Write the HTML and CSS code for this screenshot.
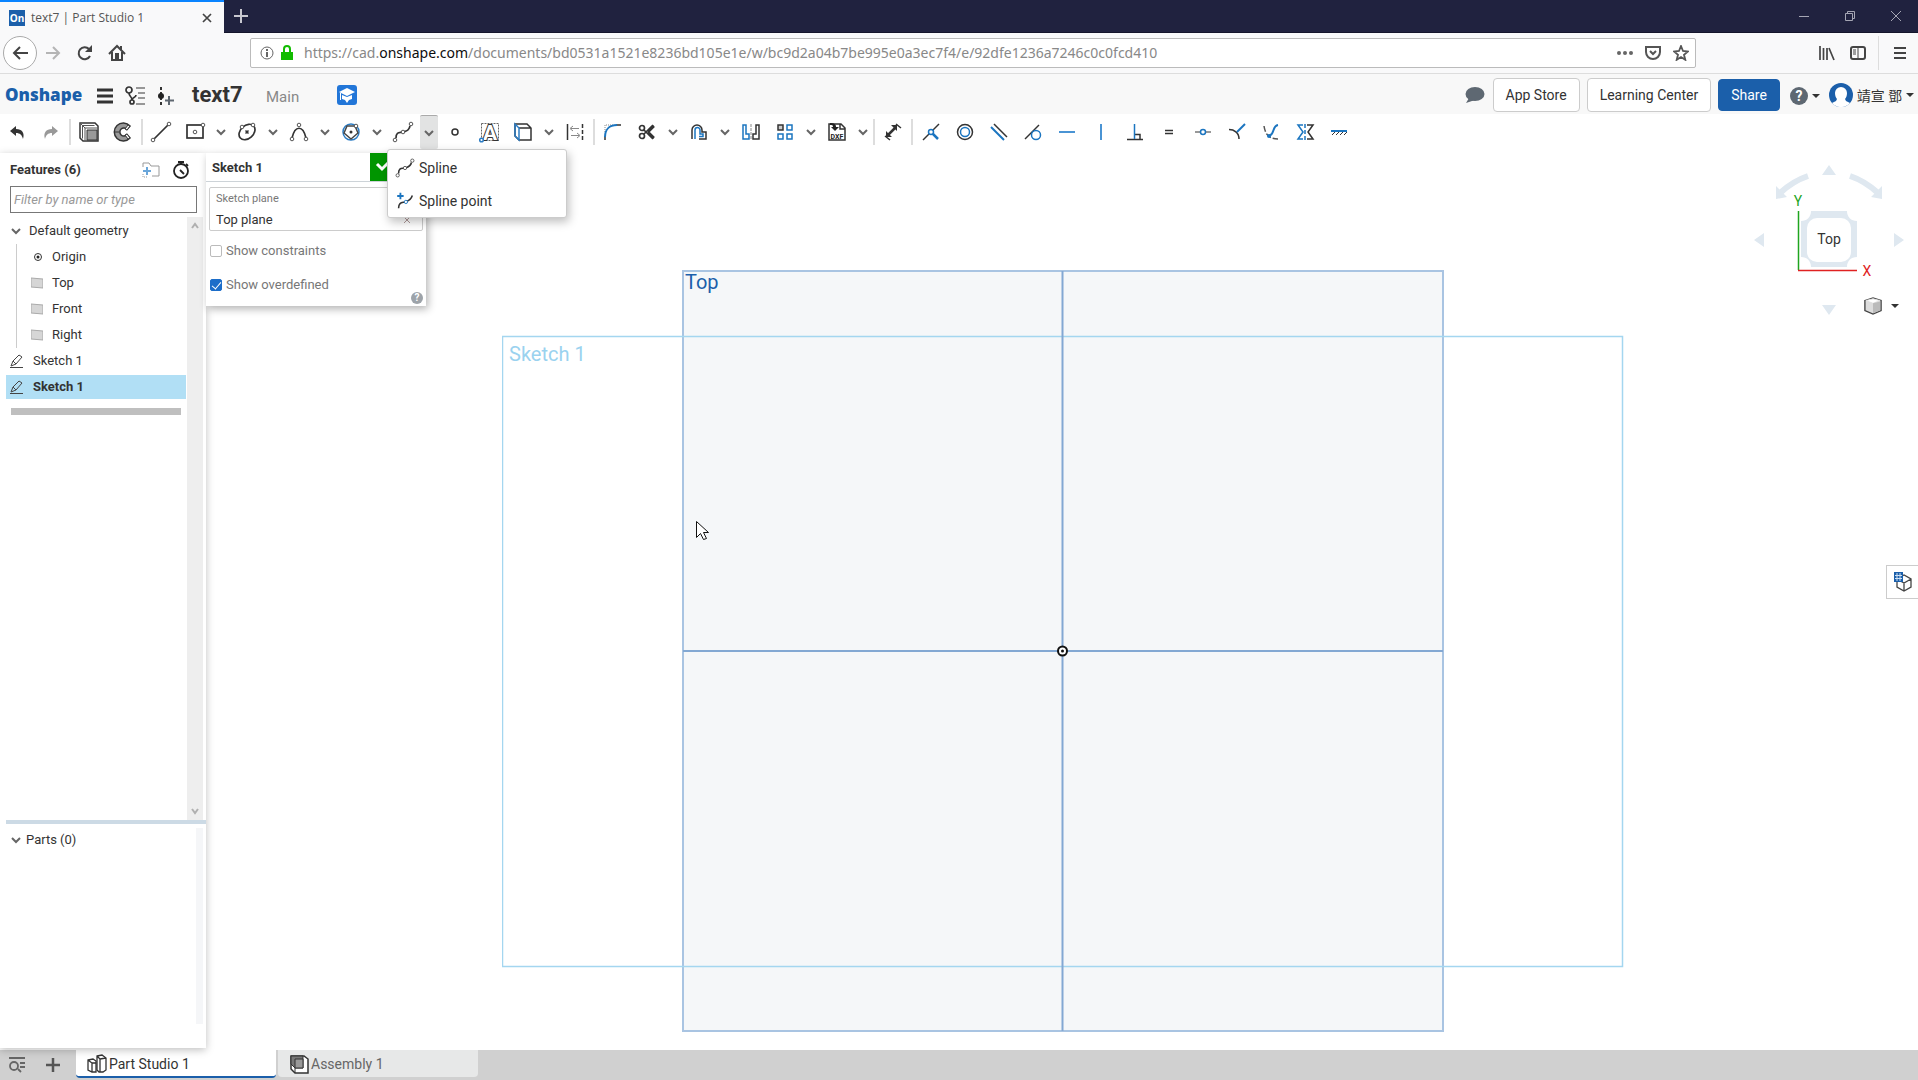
FILE: index.html
```html
<!DOCTYPE html>
<html lang="en">
<head>
<meta charset="utf-8">
<title>text7 | Part Studio 1</title>
<link rel="stylesheet" href="styles.css">
</head>
<body>
<svg class="defs" aria-hidden="true">
  <symbol id="chev" viewBox="0 0 12 12"><path d="M2 4l4 4 4-4" fill="none" stroke="#666" stroke-width="2"/></symbol>
  <symbol id="caret" viewBox="0 0 8 6"><path d="M0 1h8L4 5z" fill="#333"/></symbol>
  <symbol id="plane" viewBox="0 0 12 12"><path d="M0 1l12 1v9L0 10z" fill="#d6d6d6" stroke="#aaa" stroke-width="1"/></symbol>
  <symbol id="pencil" viewBox="0 0 14 14"><path d="M1 12l2-5 6-6 3 2-6 7zM0 13.500h13M3 7l3 3" fill="none" stroke="#444" stroke-width="1"/></symbol>
  <symbol id="spline" viewBox="0 0 24 24"><path d="M5 18C5 11 9 13 12 12S18 11 19 6" fill="none" stroke="#333" stroke-width="1.700"/><g fill="#fff" stroke="#555"><circle cx="4" cy="20" r="1.800"/><circle cx="12" cy="12" r="1.800"/><circle cx="20" cy="4" r="1.800"/></g></symbol>
</svg>

<header class="tabstrip">
  <div class="browser-tab">
    <span class="favicon">On</span>
    <span class="browser-tab-title">text7 | Part Studio 1</span>
    <button class="plain" aria-label="Close tab"><svg width="12" height="12" viewBox="0 0 12 12"><path d="M2 2l8 8M10 2l-8 8" stroke="#444" stroke-width="1.700"/></svg></button>
  </div>
  <button class="plain new-tab" aria-label="New tab"><svg width="14" height="14" viewBox="0 0 14 14"><path d="M7 0v14M0 7h14" stroke="#c8c8d0" stroke-width="2"/></svg></button>
  <div class="window-controls">
    <button class="plain" aria-label="Minimize"><svg width="12" height="12"><path d="M1 6.500h10" stroke="#a5a6b4"/></svg></button>
    <button class="plain" aria-label="Restore"><svg width="12" height="12" fill="none" stroke="#a5a6b4"><path d="M1.500 3.500h7v7h-7zM3.500 3.500v-2h7v7h-2"/></svg></button>
    <button class="plain" aria-label="Close"><svg width="12" height="12"><path d="M1 1l10 10M11 1L1 11" stroke="#a5a6b4"/></svg></button>
  </div>
</header>

<nav class="navbar">
  <div class="nav-buttons">
    <button class="plain back" aria-label="Back"><svg width="20" height="20" viewBox="0 0 20 20"><path d="M18 10H4M10 4l-6 6 6 6" fill="none" stroke="#444" stroke-width="2"/></svg></button>
    <button class="plain" aria-label="Forward"><svg width="18" height="18" viewBox="0 0 18 18"><path d="M2 9h13M9 3l6 6-6 6" fill="none" stroke="#b5b5b5" stroke-width="2"/></svg></button>
    <button class="plain" aria-label="Reload"><svg width="18" height="18" viewBox="0 0 18 18"><path d="M14 12A6 6 0 1 1 13 5" fill="none" stroke="#444" stroke-width="2"/><path d="M16 1v7H9z" fill="#444"/></svg></button>
    <button class="plain" aria-label="Home"><svg width="18" height="18" viewBox="0 0 18 18"><path d="M1 10l8-8 8 8M4 8v8h10V8M13 2v4" fill="none" stroke="#444" stroke-width="2"/><path d="M7 16V9h4v7z" fill="#444"/></svg></button>
  </div>
  <div class="urlbar">
    <svg width="14" height="14" viewBox="0 0 14 14"><circle cx="7" cy="7" r="6" fill="none" stroke="#666"/><path d="M7 6v5M7 3v2" stroke="#666" stroke-width="2"/></svg>
    <svg width="12" height="16" viewBox="0 0 12 16"><path d="M0 7h12v8H0z" fill="#12bc00"/><path d="M3 8V4a3 3 0 0 1 6 0v4" fill="none" stroke="#12bc00" stroke-width="2"/></svg>
    <div class="url" role="textbox" aria-label="Address" contenteditable="true" spellcheck="false">https://cad.<b>onshape.com</b>/documents/bd0531a1521e8236bd105e1e/w/bc9d2a04b7be995e0a3ec7f4/e/92dfe1236a7246c0c0fcd410</div>
    <button class="plain" aria-label="Page actions"><svg width="16" height="16" viewBox="0 0 16 16" fill="#666"><circle cx="2" cy="8" r="2"/><circle cx="8" cy="8" r="2"/><circle cx="14" cy="8" r="2"/></svg></button>
    <button class="plain" aria-label="Save to Pocket"><svg width="16" height="16" viewBox="0 0 16 16" fill="none" stroke="#555" stroke-width="2"><path d="M1 2h14v5a7 7 0 0 1-14 0z"/><path d="M5 6l3 3 3-3"/></svg></button>
    <button class="plain" aria-label="Bookmark"><svg width="16" height="16" viewBox="0 0 16 16"><path d="M8 1l2 5 5 .5-4 3.300 1.300 5L8 12l-4.300 2.800 1.300-5-4-3.300L6 6z" fill="none" stroke="#555" stroke-width="1.800"/></svg></button>
  </div>
  <div class="nav-right">
    <button class="plain" aria-label="Library"><svg width="16" height="16" viewBox="0 0 16 16" stroke="#444" stroke-width="1.700"><path d="M1 1v14M4.500 3v12M8 3v12M10 3l5 12"/></svg></button>
    <button class="plain" aria-label="Sidebars"><svg width="16" height="14" viewBox="0 0 16 14" fill="none" stroke="#444"><rect x="1" y="1" width="14" height="12" rx="2" stroke-width="2"/><path d="M8 1v12M3 4h3M3 6h3M3 8h3"/></svg></button>
    <span class="nav-sep"></span>
    <button class="plain" aria-label="Open menu"><svg width="12" height="12" viewBox="0 0 12 12"><path d="M0 1h12M0 6h12M0 11h12" stroke="#444" stroke-width="2"/></svg></button>
  </div>
</nav>

<header class="appbar">
  <a href="#" class="logo">Onshape</a>
  <button class="plain" aria-label="Document menu"><svg width="16" height="16" viewBox="0 0 16 16"><path d="M0 2h16M0 8h16M0 14h16" stroke="#333" stroke-width="3"/></svg></button>
  <button class="plain" aria-label="Versions and history"><svg width="20" height="20" viewBox="0 0 20 20" fill="none" stroke="#333" stroke-width="1.700"><circle cx="4" cy="4" r="3"/><circle cx="7" cy="16" r="2"/><path d="M4 7c0 4 3 3 3 7M7 14c0-3 4-2 4-5"/><path d="M11 2h9M13 7h7M13 12h7M11 18h9" stroke="#777"/></svg></button>
  <button class="plain" aria-label="Insert"><svg width="18" height="20" viewBox="0 0 18 20"><path d="M5 1v3M5 6v8M5 16v3" stroke="#333" stroke-width="2"/><circle cx="5" cy="10" r="3" fill="#222"/><path d="M13 10v9M9 14.500h9" stroke="#5e6770" stroke-width="2"/></svg></button>
  <h1 class="doc-name">text7</h1>
  <span class="workspace">Main</span>
  <svg width="20" height="20" viewBox="0 0 20 20"><rect width="20" height="20" rx="3" fill="#2276d8"/><path d="M10 3l8 4-8 4-8-4z" fill="#fff"/><path d="M5 10l5 2 5-2v4l-3 1-2 3-2-3-3-1z" fill="#fff"/><path d="M3.500 8v7" stroke="#fff"/></svg>
  <div class="appbar-right">
    <button class="plain" aria-label="Comments"><svg width="20" height="18" viewBox="0 0 20 18"><ellipse cx="10" cy="8" rx="9.500" ry="7" fill="#5e6872"/><path d="M4 12l-3 5 9-3z" fill="#5e6872"/></svg></button>
    <button class="btn">App Store</button>
    <button class="btn">Learning Center</button>
    <button class="btn btn-primary">Share</button>
    <button class="plain help" aria-label="Help"><span class="help-dot">?</span><svg width="8" height="6"><use href="#caret"/></svg></button>
    <button class="plain user"><svg width="24" height="24" viewBox="0 0 24 24"><circle cx="12" cy="12" r="12" fill="#1b5faa"/><path d="M6 10a6 6 0 0 1 12 0c0 3-1 5-2 6l1 2 4 2a12 12 0 0 1-18 0l4-2 1-2C7 15 6 13 6 10z" fill="#fff"/></svg><span class="user-name">靖宣 鄧</span><svg width="8" height="6"><use href="#caret"/></svg></button>
  </div>
</header>

<div class="toolbar" role="toolbar" aria-label="Sketch tools">
  <button class="tool" aria-label="Undo"><svg viewBox="0 0 24 24"><path d="M5 11l6-5v3c6 0 9 4 7 10-1-4-3-6-7-6v3z" fill="#333"/></svg></button>
  <button class="tool" aria-label="Redo"><svg viewBox="0 0 24 24"><path d="M19 11l-6-5v3c-6 0-9 4-7 10 1-4 3-6 7-6v3z" fill="#999"/></svg></button>
  <span class="sep"></span>
  <button class="tool" aria-label="Extrude"><svg viewBox="0 0 24 24" fill="none" stroke="#333"><path d="M3 3h15l3 3v15H6l-3-3z" fill="#fff" stroke-width="1.500"/><path d="M5.500 5.500h12M5.500 5.500v13M8 8h12M8 8v12M3 3l5 5" stroke="#555"/><path d="M10 10h10v10H10z" fill="#999"/></svg></button>
  <button class="tool" aria-label="Revolve"><svg viewBox="0 0 24 24"><path d="M19 6A9 9 0 1 0 19 18L16 14.500a4 4 0 1 1 0-5z" fill="#999" stroke="#333" stroke-width="1.500"/><path d="M3 12h5M17 5l2 1-3 4-2-1zM17 19l2-1-3-4-2 1z" stroke="#333" fill="#fff"/></svg></button>
  <span class="sep"></span>
  <button class="tool" aria-label="Line"><svg viewBox="0 0 24 24"><path d="M5 19L19 5" stroke="#333" stroke-width="1.700"/><g fill="#fff" stroke="#555"><circle cx="4" cy="20" r="1.800"/><circle cx="20" cy="4" r="1.800"/></g></svg></button>
  <button class="tool" aria-label="Rectangle"><svg viewBox="0 0 24 24"><rect x="4" y="5" width="16" height="13" fill="none" stroke="#333" stroke-width="1.700"/><g fill="#fff" stroke="#555"><circle cx="12" cy="12" r="1.800"/><circle cx="20" cy="5" r="1.800"/></g></svg></button>
  <button class="drop" aria-label="Rectangle tools"><svg><use href="#chev"/></svg></button>
  <button class="tool" aria-label="Ellipse"><svg viewBox="0 0 24 24"><ellipse cx="12" cy="12" rx="9" ry="6.500" transform="rotate(-42 12 12)" fill="none" stroke="#333" stroke-width="1.700"/><path d="M10.500 10.500l3 3M13.500 10.500l-3 3" stroke="#333" stroke-width="1.500"/><g fill="#fff" stroke="#555"><circle cx="7" cy="7" r="1.800"/><circle cx="18" cy="5" r="1.800"/></g></svg></button>
  <button class="drop" aria-label="Circle tools"><svg><use href="#chev"/></svg></button>
  <button class="tool" aria-label="Arc"><svg viewBox="0 0 24 24"><path d="M5 18C8 5 16 5 19 18" fill="none" stroke="#333" stroke-width="1.700"/><g fill="#fff" stroke="#555"><circle cx="5" cy="19" r="1.800"/><circle cx="19" cy="19" r="1.800"/><circle cx="12" cy="5" r="1.800"/></g></svg></button>
  <button class="drop" aria-label="Arc tools"><svg><use href="#chev"/></svg></button>
  <button class="tool" aria-label="Polygon"><svg viewBox="0 0 24 24"><circle cx="12" cy="12" r="8" fill="none" stroke="#2b7cc4" stroke-width="1.500"/><path d="M8 6h8l3 7-7 6-7-6z" fill="#fff" stroke="#444" stroke-width="1.500" stroke-linejoin="round"/><circle cx="12" cy="12" r="1.500" fill="#333"/><circle cx="17" cy="6" r="1.800" fill="#fff" stroke="#555"/></svg></button>
  <button class="drop" aria-label="Polygon tools"><svg><use href="#chev"/></svg></button>
  <button class="tool" aria-label="Spline"><svg><use href="#spline"/></svg></button>
  <button class="drop drop-open" aria-label="Spline tools" aria-expanded="true"><svg><use href="#chev"/></svg></button>
  <button class="tool" aria-label="Point"><svg viewBox="0 0 24 24"><circle cx="12" cy="12" r="3" fill="#fff" stroke="#333" stroke-width="1.500"/></svg></button>
  <button class="tool" aria-label="Text"><svg viewBox="0 0 24 24"><path d="M4.500 3.500h17v17h-17z" fill="none" stroke="#666" stroke-dasharray="2 1"/><text x="13" y="20" text-anchor="middle" class="icon-a">A</text><circle cx="4.500" cy="20" r="1.800" fill="#fff" stroke="#2b7cc4" stroke-width="1.500"/></svg></button>
  <button class="tool" aria-label="Use"><svg viewBox="0 0 24 24" fill="none" stroke="#333" stroke-width="1.500"><path d="M4 4h12l4 4v12H8l-4-4zM8 8h12M16 4l4 4"/><path d="M4 4v12l4 4V8z" stroke="#2b7cc4" stroke-width="1.500"/></svg></button>
  <button class="drop" aria-label="Use tools"><svg><use href="#chev"/></svg></button>
  <button class="tool" aria-label="Construction"><svg viewBox="0 0 24 24"><path d="M4.500 4v16" stroke="#333" stroke-width="1.500"/><path d="M19.500 4v16" stroke="#333" stroke-width="1.500" stroke-dasharray="4 2"/><path d="M8 8.500h8M8 15.500h8M10 6L7 8.500 10 11M14 13l3 2.500-3 2.500" fill="none" stroke="#888"/></svg></button>
  <span class="sep"></span>
  <button class="tool" aria-label="Sketch fillet"><svg viewBox="0 0 24 24" fill="none"><path d="M4 20v-4M15 5h5" stroke="#333" stroke-width="1.500"/><path d="M4 12V5h8" stroke="#888" stroke-dasharray="1 1"/><path d="M4 17C4 10 8 5 16 5" stroke="#1b75c0" stroke-width="2"/></svg></button>
  <button class="tool" aria-label="Trim"><svg viewBox="0 0 24 24" fill="none" stroke="#333" stroke-width="1.700"><path d="M9 14l9-9M9 10l9 9"/><path d="M13 12l6-6M13 12l6 6" stroke-width="2.500"/><circle cx="7" cy="8" r="2.500"/><circle cx="7" cy="16" r="2.500"/></svg></button>
  <button class="drop" aria-label="Trim tools"><svg><use href="#chev"/></svg></button>
  <button class="tool" aria-label="Offset"><svg viewBox="0 0 24 24" fill="none"><path d="M5 19v-9a5 5 0 0 1 10 0v2h4v7h-7" stroke="#333" stroke-width="1.500"/><path d="M8 19v-9a2.500 2.500 0 0 1 5 0v4h3v2.500h-4" stroke="#1b75c0" stroke-width="1.500"/></svg></button>
  <button class="drop" aria-label="Offset tools"><svg><use href="#chev"/></svg></button>
  <button class="tool" aria-label="Mirror"><svg viewBox="0 0 24 24" fill="none"><path d="M4 5h3v9h3v5H4z" stroke="#1b75c0" stroke-width="1.500"/><path d="M20 5h-3v9h-3v5h6z" stroke="#333" stroke-width="1.500"/><path d="M12 4v16" stroke="#888" stroke-dasharray="3 1"/></svg></button>
  <button class="tool" aria-label="Linear pattern"><svg viewBox="0 0 24 24" fill="none" stroke="#1b75c0" stroke-width="1.500"><path d="M5 5h5v5H5z" stroke="#333" fill="#ccc"/><path d="M14 5h5v5h-5zM5 14h5v5H5zM14 14h5v5h-5z"/></svg></button>
  <button class="drop" aria-label="Pattern tools"><svg><use href="#chev"/></svg></button>
  <button class="tool" aria-label="Insert DXF or DWG"><svg viewBox="0 0 24 24" fill="none"><path d="M4 4h12l4 4v12H4zM15 4v5h5" stroke="#333" stroke-width="1.500"/><path d="M5 3c4 0 6 1 6 4h3l-4 4-4-4h2c0-2-1-2-3-2z" fill="#222"/><text x="12" y="19" text-anchor="middle" class="icon-dxf">DXF</text></svg></button>
  <button class="drop" aria-label="Insert tools"><svg><use href="#chev"/></svg></button>
  <span class="sep"></span>
  <button class="tool" aria-label="Dimension"><svg viewBox="0 0 24 24"><path d="M7 15l7-7" stroke="#333" stroke-width="2.500"/><path d="M10 5h6v6zM5 11v6h6z" fill="#333"/><path d="M15 4l5 4M4 16l5 4" stroke="#333" stroke-width="1.500"/></svg></button>
  <span class="sep"></span>
  <button class="tool" aria-label="Coincident"><svg viewBox="0 0 24 24" fill="none"><path d="M4 20L20 4" stroke="#333" stroke-width="1.500"/><path d="M13 13l6 6" stroke="#1b75c0" stroke-width="2.500"/><circle cx="12" cy="12" r="2.500" fill="#fff" stroke="#1b75c0" stroke-width="1.500"/></svg></button>
  <button class="tool" aria-label="Concentric"><svg viewBox="0 0 24 24" fill="none" stroke-width="1.500"><circle cx="12" cy="12" r="7.500" stroke="#333"/><circle cx="12" cy="12" r="4.500" stroke="#1b75c0"/></svg></button>
  <button class="tool" aria-label="Parallel"><svg viewBox="0 0 24 24"><path d="M7 4l13 13" stroke="#333" stroke-width="1.500"/><path d="M4 7l13 13" stroke="#1b75c0" stroke-width="2"/></svg></button>
  <button class="tool" aria-label="Tangent"><svg viewBox="0 0 24 24" fill="none"><path d="M4 19L18 5" stroke="#333" stroke-width="1.500"/><circle cx="15" cy="15" r="4.500" stroke="#1b75c0" stroke-width="1.500"/></svg></button>
  <button class="tool" aria-label="Horizontal"><svg viewBox="0 0 24 24"><path d="M4 12h16" stroke="#4a94d4" stroke-width="2"/></svg></button>
  <button class="tool" aria-label="Vertical"><svg viewBox="0 0 24 24"><path d="M12 4v16" stroke="#4a94d4" stroke-width="2"/></svg></button>
  <button class="tool" aria-label="Perpendicular"><svg viewBox="0 0 24 24" fill="none" stroke="#333" stroke-width="1.500"><path d="M4 19.500h16M12 14.500h5v5"/><path d="M11.500 4v15" stroke="#1b75c0"/></svg></button>
  <button class="tool" aria-label="Equal"><svg viewBox="0 0 24 24"><path d="M8 10.500h8M8 13.500h8" stroke="#333" stroke-width="1.500"/></svg></button>
  <button class="tool" aria-label="Midpoint"><svg viewBox="0 0 24 24"><path d="M4 12h16" stroke="#999" stroke-width="2"/><circle cx="12" cy="12" r="2.500" fill="#fff" stroke="#1b75c0" stroke-width="1.500"/></svg></button>
  <button class="tool" aria-label="Normal"><svg viewBox="0 0 24 24" fill="none"><path d="M4 9.500c5 0 10 3 10 9.500" stroke="#333" stroke-width="1.500"/><path d="M12 12l8-8" stroke="#1b75c0" stroke-width="2"/></svg></button>
  <button class="tool" aria-label="Pierce"><svg viewBox="0 0 24 24" fill="none"><path d="M5 6c1 6 3 13 14 13" stroke="#555" stroke-width="1.500" stroke-dasharray="6 2"/><path d="M10 16c6-2 3-10 9-11" stroke="#1b75c0" stroke-width="2"/><circle cx="10" cy="16" r="2" fill="#1b75c0"/></svg></button>
  <button class="tool" aria-label="Symmetric"><svg viewBox="0 0 24 24" fill="none" stroke-width="1.500"><path d="M10 5H5l5 7-5 7h5" stroke="#1b75c0"/><path d="M14 5h6l-5 7 5 7h-6" stroke="#333"/><path d="M12 4v16" stroke="#1b75c0" stroke-dasharray="4 2"/></svg></button>
  <button class="tool" aria-label="Fix"><svg viewBox="0 0 24 24"><path d="M4 11h16" stroke="#1b75c0" stroke-width="2"/><path d="M8 12l-3 3M12 12l-3 3M16 12l-3 3M20 12l-3 3" stroke="#333"/></svg></button>
</div>

<main class="workspace-area">
  <aside class="sidebar">
    <section class="features">
      <div class="features-head">
        <h2>Features (6)</h2>
        <button class="plain" aria-label="Add folder"><svg width="18" height="16" viewBox="0 0 18 16" fill="none"><path d="M1 5V1h6l2 3h8v10h-7" stroke="#999"/><path d="M1 12v3h5" stroke="#999" stroke-dasharray="1 1"/><path d="M5 5v8M1 9h8" stroke="#6aa6da" stroke-width="2"/></svg></button>
        <button class="plain" aria-label="Regeneration times"><svg width="18" height="18" viewBox="0 0 18 18" fill="none" stroke="#222" stroke-width="1.800"><circle cx="9" cy="10" r="7"/><path d="M6 1h6M9 1v2M14 3l2 2M8 9l4 4" /></svg></button>
      </div>
      <input class="filter" type="text" placeholder="Filter by name or type" aria-label="Filter features">
      <div class="features-body">
        <ul class="tree">
          <li class="row group"><svg width="12" height="12"><use href="#chev"/></svg>Default geometry</li>
          <li>
            <ul class="subtree">
              <li class="row"><svg width="12" height="12" viewBox="0 0 12 12"><circle cx="7" cy="6" r="3.500" fill="none" stroke="#333"/><circle cx="7" cy="6" r="1.500" fill="#222"/></svg>Origin</li>
              <li class="row"><svg width="12" height="12"><use href="#plane"/></svg>Top</li>
              <li class="row"><svg width="12" height="12"><use href="#plane"/></svg>Front</li>
              <li class="row"><svg width="12" height="12"><use href="#plane"/></svg>Right</li>
            </ul>
          </li>
          <li class="row sketch"><svg width="14" height="14"><use href="#pencil"/></svg>Sketch 1</li>
          <li class="row sketch selected"><svg width="14" height="14"><use href="#pencil"/></svg>Sketch 1</li>
          <li class="rollback"></li>
        </ul>
        <div class="scroll">
          <svg width="10" height="8" viewBox="0 0 10 8"><path d="M2 6l3-4 3 4" fill="none" stroke="#b0b0b0" stroke-width="2"/></svg>
          <svg width="10" height="8" viewBox="0 0 10 8"><path d="M2 2l3 4 3-4" fill="none" stroke="#b0b0b0" stroke-width="2"/></svg>
        </div>
      </div>
    </section>
    <section class="parts">
      <h3 class="parts-head"><svg width="12" height="12"><use href="#chev"/></svg>Parts (0)</h3>
      <div class="parts-scroll"></div>
    </section>
  </aside>

  <section class="canvas">
    <svg class="scene" width="1122" height="762" viewBox="502 270 1122 762">
      <rect x="683" y="271" width="760" height="760" fill="#f5f7f9" stroke="#a9c4e2" stroke-width="2"/>
      <rect x="502.500" y="336.500" width="1120" height="630" fill="none" stroke="#a4d6f0" stroke-width="1.500"/>
      <path d="M683 651h760M1062.500 271v760" stroke="#83a8d3" stroke-width="2"/>
      <circle cx="1062.500" cy="651" r="4.500" fill="#fff" stroke="#111" stroke-width="2"/><circle cx="1062.500" cy="651" r="1.500" fill="#111"/>
      <text x="685" y="289" class="label-plane">Top</text>
      <text x="509" y="361" class="label-sketch">Sketch 1</text>
      <path d="M696.500 521.500v16l4-4 3 6 3-1-3-6h5z" fill="#fff" stroke="#111"/>
    </svg>

    <svg class="viewcube" width="178" height="177" viewBox="0 3 178 177">
      <g fill="#dfe8f0">
        <path d="M82 25h14l-7-10zM14 90l10-7v14zM164 90l-10-7v14zM82 155h14l-7 10z"/>
        <path d="M71 61h36c0 6 4 10 10 10v36c-6 0-10 4-10 10H71c0-6-4-10-10-10V71c6 0 10-4 10-10z"/>
        <path d="M36 36v13l11-2zM142 36v13l-11-2z"/>
      </g>
      <path d="M68 26Q53 31 40 43M110 26Q125 31 138 43" fill="none" stroke="#dfe8f0" stroke-width="6"/>
      <rect x="67" y="68" width="44" height="44" rx="10" fill="#fff"/>
      <path d="M58.500 61v59" stroke="#1fa51f" stroke-width="1.500"/><path d="M58 120.500h59" stroke="#e02222" stroke-width="1.500"/>
      <text x="89" y="94" text-anchor="middle" class="cube-top">Top</text>
      <text x="58" y="56" text-anchor="middle" class="axis-y">Y</text>
      <text x="127" y="126" text-anchor="middle" class="axis-x">X</text>
    </svg>
    <button class="plain shade" aria-label="View options"><svg width="18" height="18" viewBox="0 0 20 20" stroke="#444"><path d="M1 4l9-3 9 3v11l-9 4-9-4z" fill="#ddd" stroke-width="1.500"/><path d="M2 4l8 3 8-3-8-2z" fill="#fff" stroke="#ddd"/><path d="M10 7v11l8-3V5z" fill="#bbb" stroke="none"/></svg><svg width="8" height="6"><use href="#caret"/></svg></button>
    <button class="plain side-tab" aria-label="Tables"><svg width="22" height="22" viewBox="0 0 22 22"><path d="M5 8v8l7 4 7-4V8l-7-4zM5 8l7 4 7-4M12 12v8" fill="#fff" stroke="#444" stroke-width="1.300"/><path d="M2 1h9v10H2z" fill="#1b5faa"/><path d="M5 2v8M8 2v8M3 4.500h7M3 7.500h7" stroke="#cfe0f2"/></svg></button>

    <form class="dialog">
      <div class="dialog-head"><h2>Sketch 1</h2><button type="button" class="accept" aria-label="Accept"><svg width="20" height="14" viewBox="0 0 20 14"><path d="M7 4l5 5 7-7" fill="none" stroke="#fff" stroke-width="3"/></svg></button></div>
      <div class="plane-field">
        <span class="field-label">Sketch plane</span>
        <div class="field-value">Top plane<button type="button" class="plain" aria-label="Clear"><svg width="8" height="8"><path d="M1 1l6 6M7 1L1 7" stroke="#b09a9a"/></svg></button></div>
      </div>
      <label class="check"><input type="checkbox">Show constraints</label>
      <label class="check"><input type="checkbox" checked>Show overdefined</label>
      <button type="button" class="plain dialog-help" aria-label="Dialog help">?</button>
    </form>

    <div class="menu" role="menu">
      <button class="menu-item" role="menuitem"><svg width="22" height="22"><use href="#spline"/></svg>Spline</button>
      <button class="menu-item" role="menuitem"><svg width="22" height="22" viewBox="0 0 24 24"><path d="M5 20C5 13 9 14 12 13S18 12 20 6" fill="none" stroke="#333" stroke-width="1.700"/><circle cx="13" cy="13" r="1.800" fill="#fff" stroke="#1b75c0"/><path d="M7 3v7M3.500 6.500h7" stroke="#1b75c0" stroke-width="2"/></svg>Spline point</button>
    </div>
  </section>
</main>

<footer class="tabbar">
  <button class="plain tab-tool" aria-label="Search tabs"><svg width="18" height="16" viewBox="0 0 18 16" fill="none" stroke="#666" stroke-width="1.800"><path d="M1 1h16M12 6h5M12 10h5M10 12l3 3"/><circle cx="6" cy="9" r="4"/></svg></button>
  <button class="plain tab-tool" aria-label="Add tab"><svg width="16" height="16" viewBox="0 0 16 16"><path d="M8 1v14M1 8h14" stroke="#555" stroke-width="2.500"/></svg></button>
  <a href="#" class="doc-tab doc-tab-active"><svg width="20" height="20" viewBox="0 0 20 20" fill="#fff" stroke="#333" stroke-width="1.300"><path d="M1 6l5-1 3 2v11H5l-4-2zM5 18V9L1 6M5 9h4"/><path d="M10 2l5-1 4 3v12l-3 2h-4l-2-2zM13 18V5l-3-3M13 5l6-1"/></svg>Part Studio 1</a>
  <a href="#" class="doc-tab"><svg width="20" height="20" viewBox="0 0 20 20" stroke="#333"><path d="M2 2h13l4 3v14H6l-4-4z" fill="#fff" stroke-width="1.500"/><path d="M2 2h12v12H6l-4-4z" fill="#777"/><path d="M6 5h8v9H6z" fill="#999"/><path d="M6 14v5" fill="none"/></svg>Assembly 1</a>
</footer>
</body>
</html>
```

FILE: styles.css
```css
* { box-sizing: border-box; }
body {
  margin: 0;
  height: 100vh;
  display: flex;
  flex-direction: column;
  overflow: hidden;
  font: 13px/20px Roboto, "Noto Sans CJK TC", sans-serif;
  color: #333;
  background: #fff;
}
h1, h2, h3, ul { margin: 0; padding: 0; list-style: none; }
button { font: inherit; color: inherit; cursor: pointer; }
a { color: inherit; text-decoration: none; }
svg { display: block; flex: none; }
.defs { position: absolute; width: 0; height: 0; }
.plain {
  display: flex;
  align-items: center;
  justify-content: center;
  padding: 0;
  border: 0;
  background: none;
}

/* Browser chrome */
.tabstrip { display: flex; flex: none; height: 33px; background: #20223f; border-bottom: 1px solid #14152b; }
.browser-tab {
  display: flex;
  align-items: center;
  gap: 6px;
  width: 224px;
  height: 33px;
  padding: 0 11px 0 9px;
  border-top: 2px solid #0a84ff;
  background: #f9f9fa;
  font: 12px/16px "Open Sans", sans-serif;
  color: #555;
}
.browser-tab-title { flex: 1; white-space: nowrap; }
.favicon { width: 16px; background: #1b5faa; color: #fff; font: bold 10px/16px "Open Sans", sans-serif; text-align: center; }
.new-tab { width: 34px; }
.window-controls { display: flex; gap: 34px; margin-left: auto; padding-right: 16px; }
.navbar { display: flex; flex: none; align-items: center; height: 41px; background: #f9f9fa; border-bottom: 1px solid #ddd; }
.nav-buttons { display: flex; align-items: center; gap: 14px; width: 250px; padding-left: 3px; }
.nav-buttons .plain { width: 18px; }
.nav-buttons .back { width: 34px; height: 34px; margin-right: -7px; border: 1px solid #aaa; border-radius: 50%; background: #fff; }
.urlbar {
  display: flex;
  flex: 1;
  align-items: center;
  gap: 7px;
  height: 30px;
  padding: 0 6px 0 9px;
  border: 1px solid #bbb;
  border-radius: 2px;
  background: #fff;
}
.url { flex: 1; padding-left: 4px; font: 14px/20px "Noto Sans", sans-serif; color: #888; white-space: nowrap; outline: 0; }
.url b { font-weight: 400; color: #0c0c0d; }
.urlbar .plain { margin-left: 5px; }
.nav-right { display: flex; align-items: center; justify-content: flex-end; gap: 15px; width: 222px; padding-right: 12px; }
.nav-sep { width: 1px; height: 34px; margin-left: -3px; background: #ddd; }

/* Document bar */
.appbar { display: flex; flex: none; align-items: center; height: 40px; padding: 1px 4px 0 5px; background: #f8f8f8; }
.appbar > .plain { width: 30px; padding-top: 2px; }
.logo { width: 85px; font: 800 17px/24px "Open Sans", sans-serif; color: #1b5faa; }
.doc-name { width: 86px; padding-left: 12px; font-size: 22px; line-height: 28px; }
.workspace { width: 71px; padding-top: 4px; font-size: 15px; color: #888; }
.appbar-right { display: flex; align-items: center; gap: 8px; margin-left: auto; }
.btn {
  height: 34px;
  padding: 0 12px;
  border: 1px solid #ccc;
  border-radius: 4px;
  background: #fff;
  font-size: 14px;
}
.btn + .btn { margin-left: -1px; }
.btn-primary { height: 32px; border-color: #1b5faa; background: #1b5faa; color: #fff; }
.help { gap: 4px; padding: 2px 1px 0 2px; }
.help-dot { width: 18px; border-radius: 50%; background: #5e6872; color: #fff; font: bold 14px/18px Roboto, sans-serif; }
.user { gap: 4px; }
.user-name { font: 14px/20px "Noto Sans CJK TC", sans-serif; }

/* Sketch toolbar */
.toolbar { display: flex; flex: none; align-items: center; height: 39px; padding: 0 0 3px; }
.tool, .drop { display: flex; align-items: center; justify-content: center; height: 34px; padding: 0; border: 0; background: none; }
.tool { width: 34px; }
.tool svg { width: 24px; height: 24px; }
.drop { width: 18px; }
.drop svg { width: 12px; height: 12px; }
.drop-open { border-top: 1px solid #aaa; border-radius: 2px; background: #e2e3e3; }
.sep { width: 2px; height: 26px; margin: 0 1px; background: #ddd; }
.icon-a { font: bold 21px Roboto, sans-serif; fill: #fff; stroke: #333; stroke-width: 2px; paint-order: stroke; }
.icon-dxf { font: bold 7px Roboto, sans-serif; fill: #222; }

/* Feature list */
.workspace-area { display: flex; flex: 1; min-height: 0; }
.sidebar {
  position: relative;
  z-index: 1;
  display: flex;
  flex: none;
  flex-direction: column;
  width: 206px;
  margin-bottom: 2px;
  background: #fff;
  box-shadow: 0 2px 8px rgba(0, 0, 0, .25);
}
.features { display: flex; flex: 1; flex-direction: column; min-height: 0; }
.features-head { display: flex; align-items: center; gap: 12px; padding: 7px 16px 6px 10px; }
.features-head h2 { flex: 1; font-size: 13px; line-height: 20px; }
.filter { height: 27px; margin: 0 9px 4px 10px; padding: 0 3px; border: 1px solid #777; font: italic 13px Roboto, sans-serif; }
.filter::placeholder { color: #999; }
.features-body { display: flex; flex: 1; padding-right: 3px; }
.tree { flex: 1; padding: 1px 0 0 6px; }
.row { display: flex; align-items: center; height: 26px; gap: 9px; }
.group { padding-left: 4px; gap: 7px; }
.subtree { margin-left: 10px; padding-left: 14px; border-left: 1px solid #ccc; }
.sketch { padding-left: 4px; gap: 9px; }
.selected { height: 24px; margin: 1px 1px 1px 0; background: #b1dff5; font-weight: 700; }
.rollback { height: 7px; margin: 9px 6px 0 5px; background: #bfbfbf; }
.scroll { display: flex; flex-direction: column; justify-content: space-between; align-items: center; width: 16px; padding: 5px 0; background: #eee; }
.parts { display: flex; height: 228px; margin-left: 6px; padding: 4px 3px 24px 4px; border-top: 4px solid #ccdae5; }
.parts-head { display: flex; flex: 1; align-items: center; gap: 4px; height: 24px; font-size: 13px; font-weight: 400; }
.parts-scroll { width: 7px; background: #f5f6f8; }

/* Modelling canvas and what floats over it */
.canvas { position: relative; display: flex; flex: 1; align-items: flex-end; justify-content: center; min-width: 0; padding: 0 0 18px 2px; }
.label-plane { font: 20px Roboto, sans-serif; fill: #1b5faa; }
.label-sketch { font: 20px Roboto, sans-serif; fill: #9ad2ef; }
.viewcube { position: absolute; top: 0; right: 0; }
.cube-top { font: 14px Roboto, sans-serif; fill: #333; }
.axis-x, .axis-y { font: 14px Roboto, sans-serif; fill: #e02222; }
.axis-y { fill: #1fa51f; }
.shade { position: absolute; top: 144px; right: 19px; gap: 9px; }
.side-tab { position: absolute; top: 412px; right: 0; width: 32px; height: 34px; border: 1px solid #ccc; border-right: 0; background: #fff; }
.dialog { position: absolute; top: 0; left: 0; z-index: 2; width: 220px; height: 153px; background: #fff; box-shadow: 2px 3px 8px rgba(0, 0, 0, .3); }
.dialog-head { display: flex; align-items: stretch; height: 29px; border-bottom: 1px solid #cdd3d8; }
.dialog-head h2 { flex: 1; padding-left: 6px; font-size: 13px; line-height: 30px; }
.accept { width: 56px; padding: 0; border: 0; background: #009500; }
.plane-field { height: 44px; margin: 5px 3px 0; padding: 3px 6px; border: 1px solid #ccc; border-radius: 2px; }
.field-label { display: block; font-size: 11px; line-height: 16px; color: #777; }
.field-value { display: flex; justify-content: space-between; padding-right: 5px; line-height: 26px; }
.check { display: flex; align-items: center; gap: 4px; height: 20px; margin: 10px 4px 14px; color: #777; }
.check input { appearance: none; width: 12px; height: 12px; margin: 0; border: 1px solid #bbb; border-radius: 2px; background: #fff; }
.check input:checked {
  border-color: #1c6dc9;
  background: #1c6dc9;
}
.check input:checked::after { content: ""; display: block; width: 4px; height: 8px; margin: 0 0 0 3px; border: solid #fff; border-width: 0 1px 1px 0; transform: rotate(40deg); }
.dialog-help { position: absolute; right: 3px; bottom: 2px; width: 12px; height: 12px; border-radius: 50%; background: #9da3a9; color: #fff; font: bold 10px/12px Roboto, sans-serif; }
.menu { position: absolute; top: -4px; left: 181px; z-index: 3; width: 180px; height: 69px; padding: 1px 0; border: 1px solid #ccc; border-radius: 3px; background: #fff; box-shadow: 2px 4px 10px rgba(0, 0, 0, .25); }
.menu-item { display: flex; align-items: center; gap: 3px; width: 100%; height: 33px; padding: 0 6px; border: 0; background: none; font-size: 14px; }

/* Document tabs */
.tabbar { display: flex; flex: none; height: 30px; background: #d0d0d0; }
.tab-tool { width: 34px; }
.tab-tool + .tab-tool { width: 42px; padding-right: 4px; }
.doc-tab {
  display: flex;
  align-items: center;
  gap: 2px;
  width: 200px;
  height: 27px;
  margin-right: 2px;
  padding-left: 11px;
  border-radius: 0 0 4px 4px;
  background: #e7e8e8;
  font-size: 14px;
  color: #666;
}
.doc-tab-active { height: 28px; padding-top: 2px; border-bottom: 2px solid #1b5faa; background: #fff; color: #333; }
```
